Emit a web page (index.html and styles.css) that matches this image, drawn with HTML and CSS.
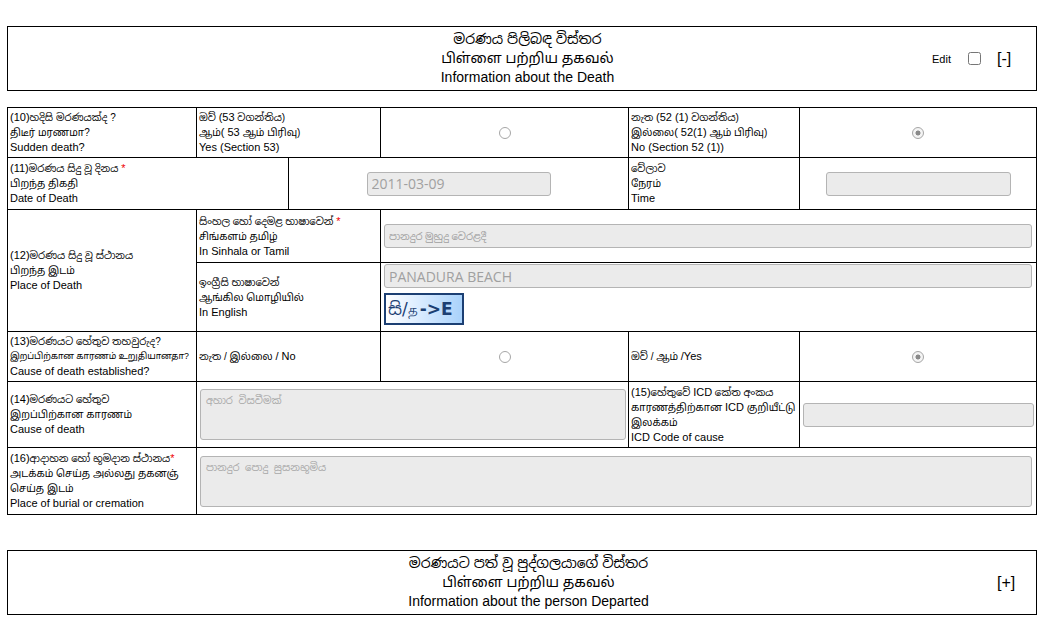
FILE: index.html
```html
<!DOCTYPE html>
<html>
<head>
<meta charset="utf-8">
<link rel="stylesheet" href="styles.css">
</head>
<body>
<div class="section-head first">
  <div class="title t1">
    <div class="si">මරණය පිලිබඳ විස්තර</div>
    <div class="ta">பிள்ளை பற்றிய தகவல்</div>
    <div class="en">Information about the Death</div>
  </div>
  <div class="tools">
    <span class="edit">Edit</span>
    <input type="checkbox" class="chk">
    <span class="toggle">[-]</span>
  </div>
</div>

<table class="form">
  <colgroup>
    <col class="c1"><col class="c2"><col class="c3"><col class="c4"><col class="c5"><col class="c6">
  </colgroup>
  <tr class="r10">
    <td class="lbl"><div class="s"><span class="e">(10)</span>හදිසි මරණයක්ද ?</div><div class="t">திடீர் மரணமா?</div><div class="e">Sudden death?</div></td>
    <td class="lbl" colspan="2"><div class="s">ඔව් <span class="e">(53</span> වගන්තිය)</div><div class="t">ஆம்<span class="e">( 53 </span>ஆம் பிரிவு)</div><div class="e">Yes (Section 53)</div></td>
    <td class="ctr"><input type="radio" name="sd" class="rad"></td>
    <td class="lbl"><div class="s">නැත <span class="e">(52 (1)</span> වගන්තිය)</div><div class="t">இல்லை<span class="e">( 52(1) </span>ஆம் பிரிவு)</div><div class="e">No (Section 52 (1))</div></td>
    <td class="ctr"><input type="radio" name="sd" class="rad" checked></td>
  </tr>
  <tr class="r11">
    <td class="lbl" colspan="2"><div class="s"><span class="e">(11)</span>මරණය සිදු වූ දිනය <span class="req">*</span></div><div class="t">பிறந்த திகதி</div><div class="e">Date of Death</div></td>
    <td class="ctr" colspan="2"><input class="field date" type="text" value="2011-03-09" disabled></td>
    <td class="lbl"><div class="s">වේලාව</div><div class="t">நேரம்</div><div class="e">Time</div></td>
    <td class="ctr"><input class="field time" type="text" disabled></td>
  </tr>
  <tr class="r12a">
    <td class="lbl" rowspan="2"><div class="s"><span class="e">(12)</span>මරණය සිදු වූ ස්ථානය</div><div class="t">பிறந்த இடம்</div><div class="e">Place of Death</div></td>
    <td class="lbl" colspan="2"><div class="s">සිංහල හෝ දෙමළ භාෂාවෙන් <span class="req">*</span></div><div class="t">சிங்களம் தமிழ்</div><div class="e">In Sinhala or Tamil</div></td>
    <td class="fcell" colspan="3"><input class="field wide si-val" type="text" value="පානදුර මුහුදු වෙරළදී" disabled></td>
  </tr>
  <tr class="r12b">
    <td class="lbl" colspan="2"><div class="s">ඉංග්‍රීසි භාෂාවෙන්</div><div class="t">ஆங்கில மொழியில்</div><div class="e">In English</div></td>
    <td class="fcell top" colspan="3">
      <input class="field wide" type="text" value="PANADURA BEACH" disabled>
      <button class="trans" type="button"><span class="tsi">සි</span>/<span class="tta">த</span><span class="arrow">-&gt;E</span></button>
    </td>
  </tr>
  <tr class="r13">
    <td class="lbl"><div class="s"><span class="e">(13)</span>මරණයට හේතුව තහවුරුද?</div><div class="t nw sq">இறப்பிற்கான காரணம் உறுதியானதா?</div><div class="e">Cause of death established?</div></td>
    <td class="lbl" colspan="2"><div class="s">නැත / <span class="t">இல்லை</span> <span class="e">/ No</span></div></td>
    <td class="ctr"><input type="radio" name="ce" class="rad"></td>
    <td class="lbl"><div class="s">ඔව් / <span class="t">ஆம்</span> <span class="e">/Yes</span></div></td>
    <td class="ctr"><input type="radio" name="ce" class="rad" checked></td>
  </tr>
  <tr class="r14">
    <td class="lbl"><div class="s"><span class="e">(14)</span>මරණයට හේතුව</div><div class="t">இறப்பிற்கான காரணம்</div><div class="e">Cause of death</div></td>
    <td class="fcell" colspan="3"><textarea class="area a14" disabled>අහාර  විසවීමක්</textarea></td>
    <td class="lbl"><div class="s"><span class="e">(15)</span>හේතුවේ <span class="e">ICD</span> කේත අංකය</div><div class="t nw">காரணத்திற்கான <span class="e">ICD</span> குறியீட்டு</div><div class="t">இலக்கம்</div><div class="e">ICD Code of cause</div></td>
    <td class="fcell"><input class="field icd" type="text" disabled></td>
  </tr>
  <tr class="r16">
    <td class="lbl"><div class="s"><span class="e">(16)</span>ආදාහන හෝ භූමදාන ස්ථානය<span class="req">*</span></div><div class="t nw">அடக்கம் செய்த அல்லது தகனஞ்</div><div class="t">செய்த இடம்</div><div class="e">Place of burial or cremation</div></td>
    <td class="fcell" colspan="5"><textarea class="area a16" disabled>පානදුර  පොදු  සුසනභූමිය</textarea></td>
  </tr>
</table>

<div class="section-head second">
  <div class="title t2">
    <div class="si">මරණයට පත් වූ පුද්ගලයාගේ විස්තර</div>
    <div class="ta">பிள்ளை பற்றிய தகவல்</div>
    <div class="en">Information about the person Departed</div>
  </div>
  <div class="tools">
    <span class="toggle">[+]</span>
  </div>
</div>
</body>
</html>
```
FILE: styles.css
```css
html, body {
  margin: 0;
  padding: 0;
  background: #fff;
}
body {
  padding: 26px 0 0 7px;
  font-family: "Liberation Sans", Arial, "Noto Sans Sinhala", "Noto Sans Tamil", sans-serif;
  color: #000;
}
.section-head {
  width: 1028px;
  border: 1px solid #000;
  display: flex;
  align-items: center;
  height: 63px;
}
.title {
  flex: 1;
  text-align: center;
  font-size: 14px;
  line-height: 19px;
}
.t1 { padding-left: 121px; }
.t2 { padding-left: 52px; }
.tools {
  display: flex;
  align-items: center;
  width: 110px;
}
.edit {
  font-size: 11px;
  margin-left: 6px;
}
.chk {
  margin: 0 0 0 17px;
  width: 13px;
  height: 13px;
}
.toggle {
  font-size: 16px;
  margin-left: 16px;
}
.second .tools { width: 39px; }
.second .toggle { margin-left: 0; }

.form {
  margin-top: 16px;
  border-collapse: collapse;
  table-layout: fixed;
  width: 1030px;
  margin-bottom: 35px;
}
.c1 { width: 189px; }
.c2 { width: 92px; }
.c3 { width: 92px; }
.c4 { width: 248px; }
.c5 { width: 171px; }
.c6 { width: 237px; }
.form td {
  border: 1px solid #000;
  padding: 1px 2px;
  vertical-align: middle;
}
.lbl {
  font-size: 11px;
  line-height: 15px;
}
.lbl .s { font-size: 10px; }
.lbl .t { font-size: 10px; }
.lbl .e { font-size: 11px; }
.lbl .nw { white-space: nowrap; }
.lbl .sq { font-size: 8.8px; letter-spacing: -0.1px; }
.req { color: #e00; font-size: 11px; }
.ctr { text-align: center; }
.r10 { height: 50px; }
.r11 { height: 52px; }
.r12a { height: 53px; }
.r12b { height: 69px; }
.r13 { height: 50px; }
.r14 { height: 66px; }
.r16 { height: 67px; }
.fcell { padding: 1px 3px !important; }
.fcell.top { vertical-align: top; }

.rad {
  -webkit-appearance: none;
  appearance: none;
  margin: 0;
  width: 12px;
  height: 12px;
  border: 1px solid #a6a6a6;
  border-radius: 50%;
  background: #fff;
  box-sizing: border-box;
  vertical-align: middle;
}
.rad:checked {
  background: radial-gradient(circle, #8a8a8a 0, #8a8a8a 2.2px, #f4f4f4 2.8px, #f4f4f4 100%);
}
.field {
  box-sizing: border-box;
  height: 24px;
  border: 1px solid #b4b4b4;
  border-radius: 3px;
  background: #ebebeb;
  color: #a0a0a0;
  font-family: "Open Sans", "Noto Sans Sinhala", sans-serif;
  font-size: 14px;
  padding: 0 4px;
  margin: 0;
  display: block;
}
.date { width: 184px; margin: 0 auto; }
.time { width: 185px; margin: 0 auto; }
.wide { width: 648px; }
.si-val { font-size: 10px; }
.icd { width: 231px; }
.area {
  box-sizing: border-box;
  display: block;
  height: 51px;
  border: 1px solid #b4b4b4;
  border-radius: 3px;
  background: #ebebeb;
  color: #a8a8a8;
  font-family: "Liberation Sans", "Noto Sans Sinhala", sans-serif;
  font-size: 10px;
  padding: 4px 5px;
  resize: none;
  margin: 0;
}
.a16 { width: 832px; }
.a14 { width: 426px; }
.trans {
  margin-top: 5px;
  width: 80px;
  height: 32px;
  box-sizing: border-box;
  border: 2px solid #1c3f73;
  background: linear-gradient(to right, #ffffff 0%, #d9ebff 45%, #a9d2fb 100%);
  color: #1c3f73;
  font-family: "DejaVu Sans", "Noto Sans Sinhala", sans-serif;
  font-size: 17px;
  padding: 0 2px;
  text-align: left;
  display: block;
  line-height: 26px;
}
.tta { font-size: 15px; }
.arrow { font-weight: bold; margin-left: 2px; }
```
